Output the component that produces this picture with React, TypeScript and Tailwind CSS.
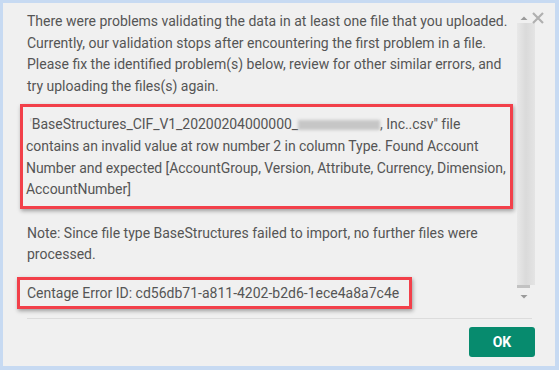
import React from 'react'

const font = { fontFamily: 'Roboto, "Liberation Sans", sans-serif' }

export default function App() {
  return (
    <div className="w-[559px] h-[370px] bg-[#c7daf2] pt-[3px] pl-[3px] pr-[4px] pb-[4px]" style={font}>
      <div className="relative h-full bg-[#f0f0f0] flex flex-col">
        <svg className="absolute left-[529px] top-[9px]" width="12" height="12" viewBox="0 0 12 12">
          <path d="M1 1 L11 11 M11 1 L1 11" stroke="#b0b0b0" strokeWidth="2.2" />
        </svg>
        <div className="flex h-[304px] pt-[8px]">
          <div className="w-[514px] text-[14px] leading-[21.6px] text-[#555555]">
            <p className="pl-[24px] pr-[8px]">
              There were problems validating the data in at least one file that you uploaded.
              Currently, our validation stops after encountering the first problem in a file.
              Please fix the identified problem(s) below, review for other similar errors, and
              try uploading the files(s) again.
            </p>
            <div className="mt-[7px] ml-[17px] w-[493px] border-[3px] border-[#f2404a] pt-[7px] pb-[5px] pl-[3px] pr-0 tracking-[-0.05px] shadow-[1px_2px_4px_rgba(0,0,0,0.35)]">
              {'\u00a0'}
              <span className="text-[#cfcfcf]">'</span>
              {'BaseStructures_CIF_V1_20200204000000_'}
              <span className="inline-block w-[82px] h-[10px] bg-[#c6c6c6] blur-[1.5px] align-[-1px]" />
              {', Inc..csv" file contains an invalid value at row number 2 in column Type. Found Account Number and expected [AccountGroup, Version, Attribute, Currency, Dimension, AccountNumber]'}
            </div>
            <p className="pl-[24px] pr-[20px] mt-[14px]">
              Note: Since file type BaseStructures failed to import, no further files were
              processed.
            </p>
            <div className="mt-[11px] ml-[14px] w-[395px] border-[3px] border-[#f2404a] pl-[7px] py-[2px] shadow-[1px_2px_4px_rgba(0,0,0,0.35)] leading-[22px]">
              Centage Error ID: cd56db71-a811-4202-b2d6-1ece4a8a7c4e
            </div>
          </div>
          <div className="w-[18px] flex flex-col items-center">
            <svg width="10" height="12" viewBox="0 0 10 12" className="ml-[-4px]">
              <path d="M1.5 9 L5 5.5 L8.5 9 Z" fill="#9a9a9a" />
            </svg>
            <div className="w-[18px] h-[262px] bg-[linear-gradient(90deg,#e8e8e8,#dadada_50%,#e4e4e4)]" />
            <div className="w-[13px] h-[3px] self-start bg-[#c2c2c2]" />
            <svg width="10" height="12" viewBox="0 0 10 12" className="ml-[-4px] mt-[3px]">
              <path d="M1.5 4 L8.5 4 L5 7.5 Z" fill="#9a9a9a" />
            </svg>
          </div>
        </div>
        <div className="ml-[24px] w-[505px] mt-[11px] border-t border-[#dcdcdc]" />
        <div className="flex justify-end pr-[20px] pt-[8px]">
          <button className="w-[66px] h-[30px] rounded-[3px] bg-[#078b6e] text-white text-[14px] font-bold">
            OK
          </button>
        </div>
      </div>
    </div>
  )
}
